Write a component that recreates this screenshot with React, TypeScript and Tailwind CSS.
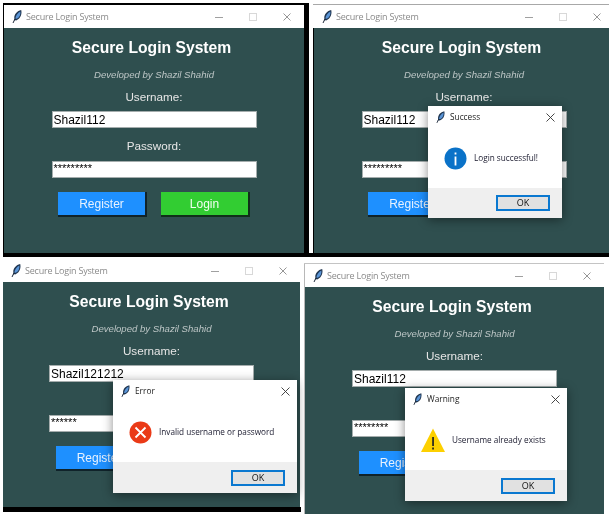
import React from "react";

const sans = "font-['Liberation_Sans',Arial,sans-serif]";
const ui = "font-['Open_Sans','Noto_Sans',sans-serif]";

function Feather({ className = "" }: { className?: string }) {
  return (
    <svg viewBox="0 0 10 13" className={className}>
      <path d="M1 13 L2.4 9.2 C1.6 5 4.6 1 9.2 0 C10.2 4 8.6 9 4.2 10.4 L2.6 10 Z" fill="#1f3550" />
      <path d="M3.4 8.6 C3.6 5.6 5.6 2.8 8.4 1.4 C8.8 4 7.6 7.4 4.8 8.8 Z" fill="#5a94d6" />
      <path d="M1 13 L3 9" stroke="#0d1a2b" strokeWidth="0.9" fill="none" />
    </svg>
  );
}

function TitleBar() {
  return (
    <div className="flex h-[23px] shrink-0 items-center bg-white pl-2 pr-[13px]">
      <Feather className="h-[13px] w-[10px]" />
      <span className={`ml-[4px] text-[9px] leading-none tracking-[-0.2px] text-[#8a8a8a] ${ui}`}>Secure Login System</span>
      <div className="ml-auto flex items-center gap-[26px]">
        <svg width="8" height="8" viewBox="0 0 8 8"><path d="M0 4.5H8" stroke="#a0a0a0" strokeWidth="1" /></svg>
        <svg width="8" height="8" viewBox="0 0 8 8"><rect x="0.5" y="0.5" width="7" height="7" fill="none" stroke="#d8d8d8" /></svg>
        <svg width="8" height="8" viewBox="0 0 8 8"><path d="M0.5 0.5L7.5 7.5M7.5 0.5L0.5 7.5" stroke="#8a8a8a" strokeWidth="0.9" /></svg>
      </div>
    </div>
  );
}

function Entry({ value, small }: { value: string; small?: boolean }) {
  return (
    <div
      className={`h-[17px] w-[205px] overflow-hidden border border-[#a5adad] bg-white pl-[1px] text-black ${sans} ${
        small ? "text-[11px] leading-[13px]" : "text-[12px] leading-[17px]"
      }`}
    >
      {value}
    </div>
  );
}

function Tk({ user, pass, covered }: { user: string; pass: string; covered?: boolean }) {
  return (
    <div className={`flex flex-1 flex-col items-center bg-[#2f4f4f] pt-[10px] ${sans}`}>
      <div className="h-[19px] pr-[5px] text-[15.7px] font-bold leading-[19px] text-white">Secure Login System</div>
      <div className="mt-[12px] h-[12px] text-[9.6px] italic leading-[12px] text-[#bdc6c6]">Developed by Shazil Shahid</div>
      <div className="mt-[8px] h-[15px] text-[11.7px] leading-[15px] text-[#e6e6e6]">Username:</div>
      <div className="mt-[7px]"><Entry value={user} /></div>
      <div className="mt-[10px] h-[15px] text-[11.7px] leading-[15px] text-[#e6e6e6]">{covered ? "" : "Password:"}</div>
      <div className="mt-[8px]"><Entry value={pass} small /></div>
      <div className="mt-[14px] flex gap-[14px]">
        <div className="flex h-[25px] w-[89px] items-center justify-center border-b-2 border-r-2 border-b-[#10232a] border-r-[#10232a] bg-[#1e90ff] pt-[1px] text-[12px] text-[#e8f2ff]">Register</div>
        <div className="flex h-[25px] w-[89px] items-center justify-center border-b-2 border-r-2 border-b-[#10301a] border-r-[#10301a] bg-[#32cd32] pt-[1px] text-[12px] text-[#f0fff0]">{covered ? "" : "Login"}</div>
      </div>
    </div>
  );
}

function Dialog({ title, text, icon, className }: { title: string; text: string; icon: React.ReactNode; className: string }) {
  return (
    <div className={`absolute flex flex-col bg-white shadow-[0_2px_10px_rgba(0,0,0,0.45)] ${ui} ${className}`}>
      <div className="flex h-[22px] shrink-0 items-center pl-2 pr-[7px]">
        <Feather className="h-[12px] w-[9px]" />
        <span className="ml-[5px] text-[8.3px] leading-none text-[#222]">{title}</span>
        <svg className="ml-auto" width="9" height="9" viewBox="0 0 9 9"><path d="M0.5 0.5L8.5 8.5M8.5 0.5L0.5 8.5" stroke="#333" strokeWidth="0.9" /></svg>
      </div>
      <div className="flex h-[60px] items-center pl-[16px]">
        {icon}
        <span className="ml-[7px] text-[8.2px] leading-none text-[#1a1a2e]">{text}</span>
      </div>
      <div className="flex flex-1 items-center justify-end bg-[#efefef] pr-[12px]">
        <div className="flex h-[16px] w-[54px] items-center justify-center border-2 border-[#0a78d0] bg-[#e1e1e1] text-[9px] text-[#111]">OK</div>
      </div>
    </div>
  );
}

const InfoIcon = (
  <svg width="23" height="23" viewBox="0 0 23 23" className="shrink-0">
    <circle cx="11.5" cy="11.5" r="11" fill="#0a72c8" />
    <rect x="10.6" y="9.5" width="1.8" height="9" fill="#fff" />
    <rect x="10.6" y="5.5" width="1.8" height="2" fill="#fff" />
  </svg>
);
const ErrorIcon = (
  <svg width="23" height="23" viewBox="0 0 23 23" className="shrink-0">
    <circle cx="11.5" cy="11.5" r="11" fill="#ea3a17" />
    <path d="M6.5 6.5L16.5 16.5M16.5 6.5L6.5 16.5" stroke="#fff" strokeWidth="1.8" />
  </svg>
);
const WarnIcon = (
  <svg width="24" height="24" viewBox="0 0 24 24" className="shrink-0">
    <path d="M12 0.5L24 24H0Z" fill="#fdd000" />
    <rect x="11.2" y="9" width="1.7" height="9" fill="#222" />
    <rect x="11.2" y="19.5" width="1.7" height="2" fill="#222" />
  </svg>
);

export default function App() {
  return (
    <div className="relative h-[514px] w-[609px] overflow-hidden bg-white blur-[0.3px]">
      {/* Window 1 */}
      <div className="absolute left-[3px] top-[3px] h-[254px] w-[306px] bg-black" />
      <div className="absolute left-[309px] top-[253px] h-[4px] w-[300px] bg-black" />
      <div className="absolute left-[4px] top-[5px] flex h-[248px] w-[300px] flex-col">
        <TitleBar />
        <Tk user="Shazil112" pass="*********" />
      </div>

      {/* Window 2 */}
      <div className="absolute left-[313px] top-[4px] h-[1px] w-[296px] bg-[#a8a8a8]" />
      <div className="absolute left-[313px] top-[28px] h-[225px] w-[1px] bg-black" />
      <div className="absolute left-[314px] top-[5px] flex h-[248px] w-[300px] flex-col">
        <TitleBar />
        <Tk user="Shazil112" pass="*********" covered />
        <Dialog title="Success" text="Login successful!" icon={InfoIcon} className="left-[114px] top-[101px] h-[112px] w-[134px]" />
      </div>

      {/* Window 3 */}
      <div className="absolute left-[3px] top-[507px] h-[5px] w-[298px] bg-black" />
      <div className="absolute left-[3px] top-[259px] flex h-[248px] w-[297px] flex-col">
        <TitleBar />
        <Tk user="Shazil121212" pass="******" covered />
        <Dialog title="Error" text="Invalid username or password" icon={ErrorIcon} className="left-[110px] top-[121px] h-[113px] w-[184px]" />
      </div>

      {/* Window 4 */}
      <div className="absolute left-[304px] top-[263px] h-[1px] w-[300px] bg-[#c4c4c4]" />
      <div className="absolute left-[304px] top-[264px] flex h-[250px] w-[300px] flex-col border-l border-l-[#b8b8b8]">
        <TitleBar />
        <Tk user="Shazil112" pass="********" covered />
        <Dialog title="Warning" text="Username already exists" icon={WarnIcon} className="left-[100px] top-[124px] h-[113px] w-[162px]" />
      </div>
    </div>
  );
}
